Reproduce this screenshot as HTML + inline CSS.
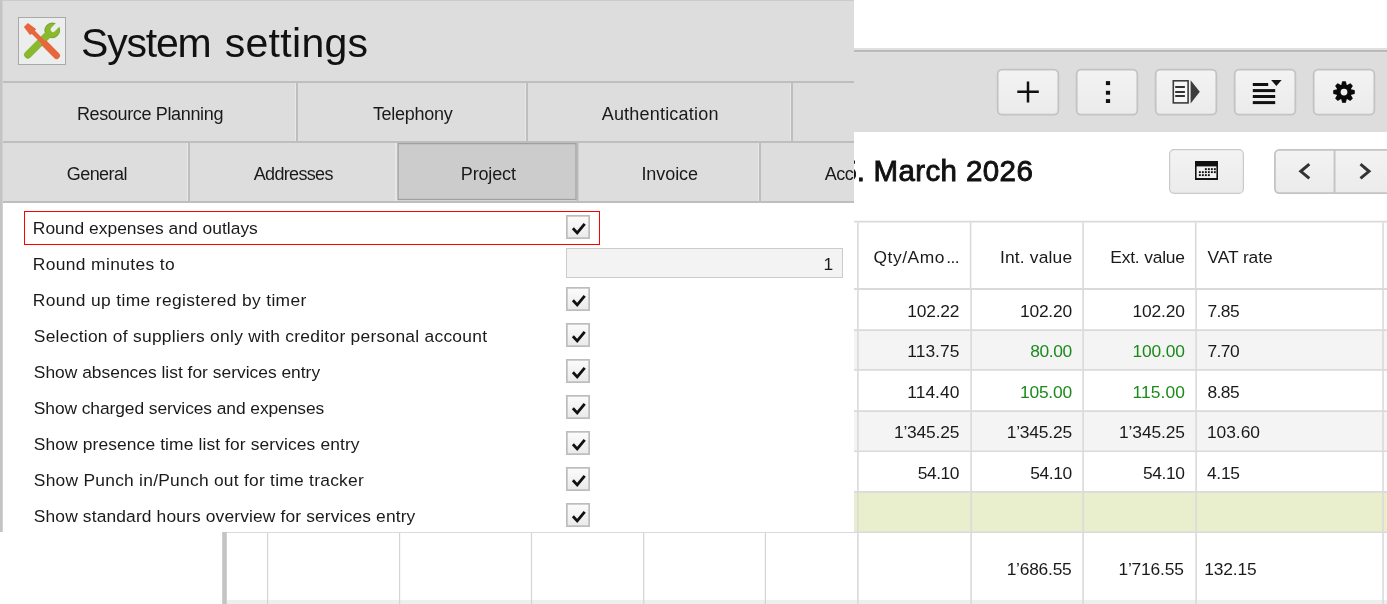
<!DOCTYPE html>
<html lang="en"><head><meta charset="utf-8"><title>System settings</title>
<style>
html,body{margin:0;padding:0;}
body{width:1387px;height:604px;overflow:hidden;background:#fff;position:relative;font-family:"Liberation Sans",sans-serif;color:#1a1a1a;}
.a{position:absolute;}
.t{position:absolute;white-space:nowrap;}
#L{will-change:transform;left:0;top:0;width:854px;height:532px;overflow:hidden;background:#fff;}
#R{will-change:transform;left:854px;top:0;width:533px;height:604px;overflow:hidden;background:#fff;}
#BL{left:0;top:532px;width:854px;height:72px;overflow:hidden;background:#fff;}
.hl{position:absolute;left:0;width:854px;height:2px;background:#bebebe;}
.vl{position:absolute;width:2px;background:#bebebe;box-shadow:-1px 0 0 #e8e8e8;}
.cb{position:absolute;left:566px;width:21px;height:21px;border:1.5px solid #bdbdbd;background:#f1f1f1;}
.cb svg{position:absolute;left:0;top:0;}
.btn{position:absolute;box-sizing:border-box;border:1.5px solid #cdcdcd;border-radius:5px;background:linear-gradient(#f3f3f3,#ebebeb);}
.gl{position:absolute;background:#dcdcdc;}
</style></head><body>

<div id="L" class="a">
  <div class="a" style="left:0;top:0;width:854px;height:202px;background:#dddddd;"></div>
  <div class="a" style="left:0;top:0;width:854px;height:1px;background:#cbcbcb;"></div>
  <div class="hl" style="top:81px;"></div>
  <div class="hl" style="top:141px;"></div>
  <div class="hl" style="top:201px;"></div>
  <div class="vl" style="left:296px;top:83px;height:58px;"></div>
  <div class="vl" style="left:526px;top:83px;height:58px;"></div>
  <div class="vl" style="left:791px;top:83px;height:58px;"></div>
  <div class="vl" style="left:188px;top:143px;height:58px;"></div>
  <div class="vl" style="left:759px;top:143px;height:58px;"></div>
  <svg class="a" style="left:395px;top:142px" width="184" height="59"><rect x="0" y="1" width="2.4" height="58" fill="#e6e6e6"/><rect x="3.05" y="1.6" width="178" height="55.9" fill="#cccccc" stroke="#a0a0a0" stroke-width="1.3"/><rect x="181.7" y="1" width="1.7" height="58" fill="#b8b8b8"/></svg>
  <div class="a" style="left:0;top:0;width:2px;height:532px;background:#c4c4c4;"></div><div class="a" style="left:2px;top:0;width:1px;height:532px;background:#d0d0d0;"></div>
  <!-- icon -->
  <div class="a" style="left:18px;top:17px;width:46px;height:46px;border:1px solid #a9a9a9;background:#eceeed;">
    <svg width="46" height="46" viewBox="0 0 46 46" style="position:absolute;left:0;top:0">
      <g transform="translate(8.9,36.7) rotate(-45)">
        <path d="M0 -3.5 H27 V3.5 H0 A3.5 3.5 0 0 1 0 -3.5z" fill="#8ab92e" stroke="#6f9e22" stroke-width="0.5"/>
        <circle cx="34.4" cy="0" r="7.4" fill="#8ab92e" stroke="#5f8f1c" stroke-width="0.7"/>
        <rect x="24" y="-3.2" width="6" height="6.4" fill="#8ab92e"/>
        <path d="M44 -2.5 H35.6 A2.5 2.5 0 0 0 35.6 2.5 H44z" fill="#eceeed"/>
      </g>
      <g transform="translate(6.9,6.9) rotate(45)" fill="#e8663c">
        <path d="M0 -2.8 L10 -4.3 L10.6 -2.2 L24.6 -2.2 L25.2 -3.4 L43.4 -3.4 A3.4 3.4 0 0 1 43.4 3.4 L25.2 3.4 L24.6 2.2 L10.6 2.2 L10 4.3 L0 2.8z"/>
      </g>
    </svg>
  </div>
  <svg width="0" height="0" style="position:absolute"><defs><linearGradient id="bg" x1="0" y1="0" x2="0" y2="1"><stop offset="0" stop-color="#f3f3f3"/><stop offset="1" stop-color="#ebebeb"/></linearGradient><linearGradient id="cg" x1="0" y1="0" x2="0" y2="1"><stop offset="0" stop-color="#fcfcfc"/><stop offset="1" stop-color="#eaeaea"/></linearGradient></defs></svg>
  <!-- rows -->
  <svg class="a" style="left:24px;top:211px" width="576" height="34"><rect x=".5" y=".5" width="575" height="33" fill="none" stroke="#ff0000" stroke-width="1"/></svg>
  <div class="a" style="left:566px;top:248px;width:275px;height:28px;border:1px solid #cbcbcb;background:#f3f3f3;"></div>
  <svg class="a" style="left:566px;top:215px" width="24" height="24"><rect x=".85" y=".85" width="22.3" height="22.3" fill="url(#cg)" stroke="#bdbdbd" stroke-width="1.7"/><path d="M6.9 13.3L11.2 17.9L18.7 8.8" stroke="#111" stroke-width="2.8" fill="none"/></svg>
  <svg class="a" style="left:566px;top:287px" width="24" height="24"><rect x=".85" y=".85" width="22.3" height="22.3" fill="url(#cg)" stroke="#bdbdbd" stroke-width="1.7"/><path d="M6.9 13.3L11.2 17.9L18.7 8.8" stroke="#111" stroke-width="2.8" fill="none"/></svg>
  <svg class="a" style="left:566px;top:323px" width="24" height="24"><rect x=".85" y=".85" width="22.3" height="22.3" fill="url(#cg)" stroke="#bdbdbd" stroke-width="1.7"/><path d="M6.9 13.3L11.2 17.9L18.7 8.8" stroke="#111" stroke-width="2.8" fill="none"/></svg>
  <svg class="a" style="left:566px;top:359px" width="24" height="24"><rect x=".85" y=".85" width="22.3" height="22.3" fill="url(#cg)" stroke="#bdbdbd" stroke-width="1.7"/><path d="M6.9 13.3L11.2 17.9L18.7 8.8" stroke="#111" stroke-width="2.8" fill="none"/></svg>
  <svg class="a" style="left:566px;top:395px" width="24" height="24"><rect x=".85" y=".85" width="22.3" height="22.3" fill="url(#cg)" stroke="#bdbdbd" stroke-width="1.7"/><path d="M6.9 13.3L11.2 17.9L18.7 8.8" stroke="#111" stroke-width="2.8" fill="none"/></svg>
  <svg class="a" style="left:566px;top:431px" width="24" height="24"><rect x=".85" y=".85" width="22.3" height="22.3" fill="url(#cg)" stroke="#bdbdbd" stroke-width="1.7"/><path d="M6.9 13.3L11.2 17.9L18.7 8.8" stroke="#111" stroke-width="2.8" fill="none"/></svg>
  <svg class="a" style="left:566px;top:467px" width="24" height="24"><rect x=".85" y=".85" width="22.3" height="22.3" fill="url(#cg)" stroke="#bdbdbd" stroke-width="1.7"/><path d="M6.9 13.3L11.2 17.9L18.7 8.8" stroke="#111" stroke-width="2.8" fill="none"/></svg>
  <svg class="a" style="left:566px;top:503px" width="24" height="24"><rect x=".85" y=".85" width="22.3" height="22.3" fill="url(#cg)" stroke="#bdbdbd" stroke-width="1.7"/><path d="M6.9 13.3L11.2 17.9L18.7 8.8" stroke="#111" stroke-width="2.8" fill="none"/></svg>
<span class="t" style="left:81.00px;top:18px;font-size:41px;line-height:50px;letter-spacing:-1.188px;color:#111;">System <span class="t" style="left:143.70px;top:0px;letter-spacing:0.300px;">settings</span></span>
<span class="t" style="left:76.90px;top:103px;font-size:18px;line-height:22px;letter-spacing:-0.349px;">Resource Planning</span>
<span class="t" style="left:372.90px;top:103px;font-size:18px;line-height:22px;letter-spacing:-0.270px;">Telephony</span>
<span class="t" style="left:601.70px;top:103px;font-size:18px;line-height:22px;letter-spacing:0.202px;">Authentication</span>
<span class="t" style="left:66.80px;top:163px;font-size:18px;line-height:22px;letter-spacing:-0.573px;">General</span>
<span class="t" style="left:253.80px;top:163px;font-size:18px;line-height:22px;letter-spacing:-0.680px;">Addresses</span>
<span class="t" style="left:460.80px;top:163px;font-size:18px;line-height:22px;letter-spacing:-0.153px;">Project</span>
<span class="t" style="left:641.40px;top:163px;font-size:18px;line-height:22px;letter-spacing:-0.070px;">Invoice</span>
<span class="t" style="left:824.70px;top:163px;font-size:18px;line-height:22px;letter-spacing:-0.450px;">Accounting</span>
<span class="t" style="left:32.80px;top:218px;font-size:17.4px;line-height:21px;letter-spacing:0.028px;">Round expenses and outlays</span>
<span class="t" style="left:32.80px;top:254px;font-size:17.4px;line-height:21px;letter-spacing:0.371px;">Round minutes to</span>
<span class="t" style="left:32.80px;top:290px;font-size:17.4px;line-height:21px;letter-spacing:0.361px;">Round up time registered by timer</span>
<span class="t" style="left:33.80px;top:326px;font-size:17.4px;line-height:21px;letter-spacing:0.269px;">Selection of suppliers only with creditor personal account</span>
<span class="t" style="left:33.80px;top:362px;font-size:17.4px;line-height:21px;letter-spacing:0.006px;">Show absences list for services entry</span>
<span class="t" style="left:33.80px;top:398px;font-size:17.4px;line-height:21px;letter-spacing:-0.076px;">Show charged services and expenses</span>
<span class="t" style="left:33.80px;top:434px;font-size:17.4px;line-height:21px;letter-spacing:0.118px;">Show presence time list for services entry</span>
<span class="t" style="left:33.80px;top:470px;font-size:17.4px;line-height:21px;letter-spacing:0.257px;">Show Punch in/Punch out for time tracker</span>
<span class="t" style="left:33.80px;top:506px;font-size:17.4px;line-height:21px;letter-spacing:0.141px;">Show standard hours overview for services entry</span>
<span class="t" style="left:823.50px;top:254px;font-size:17.4px;line-height:21px;letter-spacing:0.000px;">1</span>
</div>

<div id="BL" class="a">
  <svg class="a" style="left:0;top:0" width="854" height="72">
    <rect x="227" y="68" width="627" height="4" fill="#eeeeee"/>
    <g stroke="#d4d4d4" stroke-width="1.2">
      <path d="M267.6 0.6V72"/><path d="M399.6 0.6V72"/><path d="M531.5 0.6V72"/><path d="M643.7 0.6V72"/><path d="M765.4 0.6V72"/>
    </g>
    <path d="M222 0.4H854" stroke="#dadada" stroke-width="1.4"/>
    <rect x="222.2" y="0" width="4.6" height="72" fill="#c4c4c4"/>
  </svg>
</div>

<div id="R" class="a">
  <!-- toolbar -->
  <div class="a" style="left:0;top:48px;width:533px;height:84px;background:#dddddd;"></div>
  <div class="a" style="left:0;top:48px;width:533px;height:2px;background:#e0e0e0;"></div>
  <div class="a" style="left:0;top:50px;width:533px;height:2px;background:#b9b9b9;"></div>
  <div class="a" style="left:0;top:52px;width:533px;height:1px;background:#e1e1e1;"></div>
  <svg class="a" style="left:143px;top:69px" width="62" height="47" overflow="visible"><rect x="0.65" y="0.6" width="60.7" height="45.1" rx="4.5" fill="url(#bg)" stroke="#c3c3c3" stroke-width="1.8"/><path d="M20.3 22.8H41.8M31 12.5V33.4" stroke="#111" stroke-width="2.5" fill="none"/></svg>
  <svg class="a" style="left:222px;top:69px" width="62" height="47" overflow="visible"><rect x="0.65" y="0.6" width="60.7" height="45.1" rx="4.5" fill="url(#bg)" stroke="#c3c3c3" stroke-width="1.8"/><g fill="#111"><rect x="29.9" y="12.1" width="4.2" height="4"/><rect x="29.9" y="21.8" width="4.2" height="3.9"/><rect x="29.9" y="30.1" width="4.2" height="3.9"/></g></svg>
  <svg class="a" style="left:301px;top:69px" width="62" height="47" overflow="visible"><rect x="0.65" y="0.6" width="60.7" height="45.1" rx="4.5" fill="url(#bg)" stroke="#c3c3c3" stroke-width="1.8"/><rect x="18.3" y="11.8" width="14.8" height="22.1" fill="#f6f6f6" stroke="#3c3c3c" stroke-width="1.6"/><path d="M20.2 17.9h9.7M20.2 22.9h9.7M20.2 27h9.7" stroke="#333" stroke-width="2"/><path d="M35.6 11.2L44.8 22.8L35.6 34.5z" fill="#3c3c3e"/></svg>
  <svg class="a" style="left:380px;top:69px" width="62" height="47" overflow="visible"><rect x="0.65" y="0.6" width="60.7" height="45.1" rx="4.5" fill="url(#bg)" stroke="#c3c3c3" stroke-width="1.8"/><g fill="#111"><rect x="18.8" y="14" width="15.4" height="3"/><rect x="18.8" y="20.1" width="22.4" height="3"/><rect x="18.8" y="26" width="22.4" height="3"/><rect x="18.8" y="32.1" width="22.4" height="3"/><path d="M37.1 11.1H47.6L42.35 16.9z"/></g></svg>
  <svg class="a" style="left:459px;top:69px" width="62" height="47" overflow="visible"><rect x="0.65" y="0.6" width="60.7" height="45.1" rx="4.5" fill="url(#bg)" stroke="#c3c3c3" stroke-width="1.8"/><g transform="translate(31,23.05)"><g fill="#0a0a0a" stroke="#0a0a0a" stroke-width="1.3" stroke-linejoin="round"><circle r="6.9"/><path d="M-2.2 -6.5L-1.35 -10.1H1.35L2.2 -6.5z" transform="rotate(0)"/><path d="M-2.2 -6.5L-1.35 -10.1H1.35L2.2 -6.5z" transform="rotate(45)"/><path d="M-2.2 -6.5L-1.35 -10.1H1.35L2.2 -6.5z" transform="rotate(90)"/><path d="M-2.2 -6.5L-1.35 -10.1H1.35L2.2 -6.5z" transform="rotate(135)"/><path d="M-2.2 -6.5L-1.35 -10.1H1.35L2.2 -6.5z" transform="rotate(180)"/><path d="M-2.2 -6.5L-1.35 -10.1H1.35L2.2 -6.5z" transform="rotate(225)"/><path d="M-2.2 -6.5L-1.35 -10.1H1.35L2.2 -6.5z" transform="rotate(270)"/><path d="M-2.2 -6.5L-1.35 -10.1H1.35L2.2 -6.5z" transform="rotate(315)"/></g><circle r="3.4" fill="#f0f0f0"/></g></svg>
  <!-- date row buttons -->
  <svg class="a" style="left:315px;top:149px" width="75" height="45"><rect x="0.6" y="0.6" width="73.8" height="43.8" rx="4.5" fill="url(#bg)" stroke="#cacaca" stroke-width="1.2"/><rect x="26" y="12" width="23" height="19" fill="#111"/><rect x="27.6" y="17.4" width="19.8" height="11.6" fill="#f2f2f2"/><g fill="#111">
      <rect x="35.9" y="19.2" width="1.9" height="1.9"/><rect x="38.9" y="19.2" width="1.9" height="1.9"/><rect x="41.9" y="19.2" width="1.9" height="1.9"/><rect x="44.9" y="19.2" width="1.9" height="1.9"/><rect x="29.9" y="22.2" width="1.9" height="1.9"/><rect x="32.9" y="22.2" width="1.9" height="1.9"/><rect x="35.9" y="22.2" width="1.9" height="1.9"/><rect x="38.9" y="22.2" width="1.9" height="1.9"/><rect x="41.9" y="22.2" width="1.9" height="1.9"/><rect x="44.9" y="22.2" width="1.9" height="1.9"/><rect x="29.9" y="25.2" width="1.9" height="1.9"/><rect x="32.9" y="25.2" width="1.9" height="1.9"/><rect x="35.9" y="25.2" width="1.9" height="1.9"/><rect x="38.9" y="25.2" width="1.9" height="1.9"/></g></svg>
  <svg class="a" style="left:420px;top:149px" width="130" height="45"><rect x="0.9" y="0.9" width="128.2" height="43.2" rx="4.5" fill="url(#bg)" stroke="#c4c4c4" stroke-width="1.8"/><rect x="59.6" y="1" width="1.9" height="43" fill="#c4c4c4"/><path d="M35.3 15.2L26.8 22.3L35.3 29.4M86.5 15.2L95 22.3L86.5 29.4" stroke="#333" stroke-width="3" fill="none"/></svg>
  <!-- table -->
  <svg class="a" style="left:0;top:0" width="533" height="604">
    <rect x="0" y="330.1" width="533" height="39.8" fill="#f4f4f4"/>
    <rect x="0" y="411.1" width="533" height="40.2" fill="#f4f4f4"/>
    <rect x="0" y="491.9" width="533" height="40.4" fill="#e9efcd"/>
    <rect x="0" y="600" width="533" height="4" fill="#eeeeee"/>
    <g stroke="#dadada" stroke-width="1.6">
      <path d="M3.9 222.4V604"/>
      <path d="M116.6 222.4V288.9"/><path d="M117.1 288.9V604"/>
      <path d="M229.1 222.4V288.9"/><path d="M229.1 288.9V604"/>
      <path d="M341.7 222.4V288.9"/><path d="M342.1 288.9V604"/>
      <path d="M529.05 222.4V604"/>
      <path d="M0 221.6H533" stroke-width="1.6"/>
      <path d="M0 288.9H533" stroke-width="2.0"/>
      <path d="M0 330.1H533" stroke-width="1.6"/>
      <path d="M0 369.9H533" stroke-width="1.6"/>
      <path d="M0 411.1H533" stroke-width="1.6"/>
      <path d="M0 451.3H533" stroke-width="1.6"/>
      <path d="M0 491.9H533" stroke-width="1.6"/>
      <path d="M0 532.3H533" stroke-width="1.6"/>
    </g>
  </svg>
<span class="t" style="left:-13.40px;top:153px;font-size:29.5px;line-height:36px;letter-spacing:0.000px;color:#111;-webkit-text-stroke:0.9px #111;">5<span class="t" style="left:16.20px;top:0px;letter-spacing:0.000px;">.</span> <span class="t" style="left:32.80px;top:0px;letter-spacing:0.403px;">March 2026</span></span>
<span class="t" style="left:19.40px;top:247px;font-size:17.4px;line-height:21px;letter-spacing:0.571px;">Qty/Amo<span class="t" style="left:72.90px;top:0px;letter-spacing:-0.632px;">...</span></span>
<span class="t" style="left:146.00px;top:247px;font-size:17.4px;line-height:21px;letter-spacing:0.167px;">Int. value</span>
<span class="t" style="left:256.30px;top:247px;font-size:17.4px;line-height:21px;letter-spacing:-0.188px;">Ext. value</span>
<span class="t" style="left:353.50px;top:247px;font-size:17.4px;line-height:21px;letter-spacing:-0.095px;">VAT rate</span>
<span class="t" style="left:53.30px;top:301px;font-size:17.4px;line-height:21px;letter-spacing:-0.224px;">102.22</span>
<span class="t" style="left:166.00px;top:301px;font-size:17.4px;line-height:21px;letter-spacing:-0.224px;">102.20</span>
<span class="t" style="left:278.60px;top:301px;font-size:17.4px;line-height:21px;letter-spacing:-0.164px;">102.20</span>
<span class="t" style="left:353.50px;top:301px;font-size:17.4px;line-height:21px;letter-spacing:-0.592px;">7.85</span>
<span class="t" style="left:53.30px;top:341px;font-size:17.4px;line-height:21px;letter-spacing:0.034px;">113.75</span>
<span class="t" style="left:176.20px;top:341px;font-size:17.4px;line-height:21px;letter-spacing:-0.412px;color:#1a8a1a;">80.00</span>
<span class="t" style="left:278.60px;top:341px;font-size:17.4px;line-height:21px;letter-spacing:-0.164px;color:#1a8a1a;">100.00</span>
<span class="t" style="left:353.50px;top:341px;font-size:17.4px;line-height:21px;letter-spacing:-0.592px;">7.70</span>
<span class="t" style="left:53.30px;top:382px;font-size:17.4px;line-height:21px;letter-spacing:0.034px;">114.40</span>
<span class="t" style="left:166.00px;top:382px;font-size:17.4px;line-height:21px;letter-spacing:-0.224px;color:#1a8a1a;">105.00</span>
<span class="t" style="left:278.60px;top:382px;font-size:17.4px;line-height:21px;letter-spacing:0.094px;color:#1a8a1a;">115.00</span>
<span class="t" style="left:353.50px;top:382px;font-size:17.4px;line-height:21px;letter-spacing:-0.592px;">8.85</span>
<span class="t" style="left:39.90px;top:422px;font-size:17.4px;line-height:21px;letter-spacing:-0.179px;">1’345.25</span>
<span class="t" style="left:152.70px;top:422px;font-size:17.4px;line-height:21px;letter-spacing:-0.194px;">1’345.25</span>
<span class="t" style="left:265.00px;top:422px;font-size:17.4px;line-height:21px;letter-spacing:-0.108px;">1’345.25</span>
<span class="t" style="left:352.90px;top:422px;font-size:17.4px;line-height:21px;letter-spacing:-0.024px;">103.60</span>
<span class="t" style="left:63.80px;top:463px;font-size:17.4px;line-height:21px;letter-spacing:-0.487px;">54.10</span>
<span class="t" style="left:176.20px;top:463px;font-size:17.4px;line-height:21px;letter-spacing:-0.412px;">54.10</span>
<span class="t" style="left:289.00px;top:463px;font-size:17.4px;line-height:21px;letter-spacing:-0.387px;">54.10</span>
<span class="t" style="left:352.90px;top:463px;font-size:17.4px;line-height:21px;letter-spacing:-0.258px;">4.15</span>
<span class="t" style="left:152.70px;top:559px;font-size:17.4px;line-height:21px;letter-spacing:-0.236px;">1’686.55</span>
<span class="t" style="left:264.40px;top:559px;font-size:17.4px;line-height:21px;letter-spacing:-0.165px;">1’716.55</span>
<span class="t" style="left:350.20px;top:559px;font-size:17.4px;line-height:21px;letter-spacing:-0.164px;">132.15</span>
</div>
</body></html>
